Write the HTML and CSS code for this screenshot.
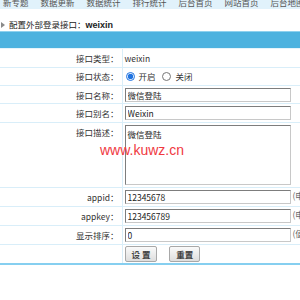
FILE: index.html
```html
<!DOCTYPE html>
<html lang="zh-CN">
<head>
    <meta charset="UTF-8">
    <title>配置外部登录接口</title>
    <link rel="stylesheet" href="styles.css">
</head>
<body>
    <div class="topnav">
        <div class="navlist">
            <span class="first">新专题</span>
            <span>数据更新</span>
            <span>数据统计</span>
            <span>排行统计</span>
            <span>后台首页</span>
            <span>网站首页</span>
            <span>后台地图</span>
        </div>
    </div>
    <div class="title">
        <svg class="arrow" width="4" height="6" viewBox="0 0 4 6"><path d="M0 0 L4 3 L0 6 Z" fill="#8a8a8a"/></svg>
        配置外部登录接口：<b>weixin</b>
    </div>
    <div class="bar"></div>
    <form class="config">
        <table class="form">
            <tr class="short">
                <td class="label">接口类型：</td>
                <td class="val">weixin</td>
            </tr>
            <tr class="short">
                <td class="label">接口状态：</td>
                <td class="val">
                    <label class="radio"><input type="radio" name="status" checked> 开启</label>
                    <label class="radio"><input type="radio" name="status"> 关闭</label>
                </td>
            </tr>
            <tr class="short">
                <td class="label">接口名称：</td>
                <td class="val"><input type="text" class="txt" value="微信登陆"></td>
            </tr>
            <tr class="short">
                <td class="label">接口别名：</td>
                <td class="val"><input type="text" class="txt" value="Weixin"></td>
            </tr>
            <tr>
                <td class="label top">接口描述：</td>
                <td class="val area"><textarea class="desc">微信登陆</textarea></td>
            </tr>
            <tr>
                <td class="label">appid：</td>
                <td class="val"><input type="text" class="txt" value="12345678"> <span class="note">(申请的APPID)</span></td>
            </tr>
            <tr>
                <td class="label">appkey：</td>
                <td class="val"><input type="text" class="txt" value="123456789"> <span class="note">(申请的APPKEY)</span></td>
            </tr>
            <tr>
                <td class="label">显示排序：</td>
                <td class="val"><input type="text" class="txt" value="0"> <span class="note">(值越小越靠前)</span></td>
            </tr>
            <tr class="last">
                <td class="label"></td>
                <td class="val">
                    <button type="button" class="btn">设 置</button>
                    <button type="reset" class="btn">重置</button>
                </td>
            </tr>
        </table>
    </form>
    <div class="mark">www.kuwz.cn</div>
</body>
</html>
```

FILE: styles.css
```css
*{
    margin:0;
    padding:0;
    box-sizing:border-box;
}

html, body{
    width:300px;
    height:300px;
    overflow:hidden;
}

body{
    position:relative;
    background:#fff;
    color:#333;
    font-family:"Noto Sans CJK SC", "Noto Sans", sans-serif;
    font-size:8.5px;
}

.topnav{
    height:9px;
    overflow:hidden;
    background:#e1f2fb;
}
.navlist{
    display:flex;
    gap:12px;
    margin-top:-4px;
    line-height:12px;
    white-space:nowrap;
    color:#555;
}
.navlist .first{
    margin-left:3px;
}

.title{
    height:22px;
    padding-top:9px;
    padding-left:1px;
    line-height:12px;
    white-space:nowrap;
    color:#222;
}
.title .arrow{
    margin-right:2px;
    vertical-align:0;
}
.title b{
    font-family:"Liberation Sans", sans-serif;
    font-size:9px;
}

.bar{
    height:18px;
    background:#4db2df;
    border-top:1px solid #8fd1ee;
    border-bottom:1px solid #e6f4fb;
}

.form{
    width:300px;
    border-collapse:collapse;
    table-layout:fixed;
}
.form td{
    border-bottom:1px solid #d9eef9;
    white-space:nowrap;
    vertical-align:middle;
}
.form tr.short td{
    height:18.25px;
}
.form tr td{
    height:19px;
}
.form .label{
    width:122px;
    padding-right:3px;
    text-align:right;
    border-right:1px solid #d9eef9;
}
.form .label.top{
    vertical-align:top;
    padding-top:3px;
}
.form .val{
    padding-left:2px;
    overflow:hidden;
}
.form .val.area{
    height:65px;
    padding-top:2px;
    padding-bottom:1px;
}
.form tr.last td{
    height:20px;
    border-bottom:2px solid #86cff0;
}

.txt{
    width:166px;
    height:14px;
    padding-left:2px;
    font:inherit;
    color:#222;
    border:1px solid #9a9a9a;
    border-top-color:#7d7d7d;
    border-left-color:#7d7d7d;
    border-bottom-color:#c8c8c8;
    border-right-color:#c8c8c8;
    vertical-align:middle;
    background:#fff;
}

.desc{
    display:block;
    width:166px;
    height:60px;
    padding:2px;
    font:inherit;
    color:#222;
    resize:none;
    border:1px solid #9a9a9a;
    border-top-color:#7d7d7d;
    border-left-color:#7d7d7d;
    border-bottom-color:#c8c8c8;
    border-right-color:#c8c8c8;
}

.note{
    color:#666;
    margin-left:0;
}

.radio{
    display:inline-flex;
    align-items:center;
    margin-right:4px;
}
.radio input{
    width:9px;
    height:9px;
    margin:0 4px 0 1px;
    accent-color:#1f73e0;
}

.btn{
    height:16px;
    padding:0 6px;
    margin-right:10px;
    font:inherit;
    font-weight:bold;
    color:#444;
    background:linear-gradient(#fafafa, #dedede);
    border:1px solid #a8a8a8;
    border-radius:2px;
    vertical-align:middle;
}

.mark{
    position:absolute;
    left:100px;
    top:143px;
    font-family:"Liberation Sans", sans-serif;
    font-size:14px;
    line-height:14px;
    color:#f0393f;
}
```
